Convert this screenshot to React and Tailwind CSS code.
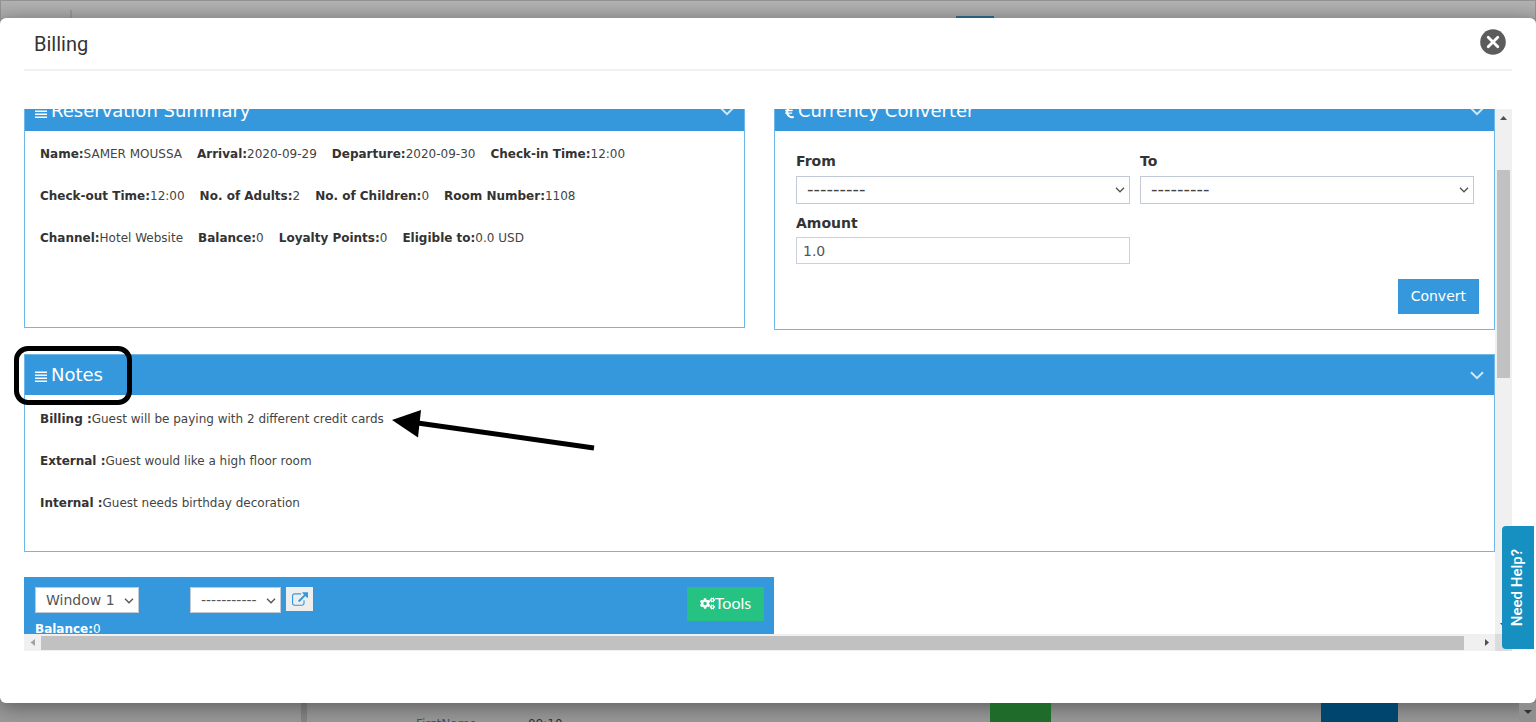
import React from "react";
import { FaCogs, FaEuroSign } from "react-icons/fa";

const Bars = () => (
  <svg viewBox="0 0 12 11" className="mt-[2px] h-[11px] w-3 shrink-0" fill="currentColor" aria-hidden="true">
    <path d="M0 0.500h12v1.500H0zM0 3.500h12v1.500H0zM0 6.500h12v1.500H0zM0 9.500h12v1.500H0z" />
  </svg>
);

const Chevron = ({ className }) => (
  <svg viewBox="0 0 14 9" className={className} fill="none" stroke="currentColor" strokeWidth="2" aria-hidden="true">
    <path d="M1 1.2l6 6 6-6" />
  </svg>
);

function PanelHead({ icon, title }) {
  return (
    <div className="flex h-10 items-center gap-1 bg-[#3598dc] px-[10px] text-white">
      {icon}
      <h2 className="flex-1 text-[18px] leading-6">{title}</h2>
      <button type="button" aria-label={`Collapse ${title}`} className="text-[#d0e8f8]">
        <Chevron className="h-[9px] w-[14px]" />
      </button>
    </div>
  );
}

function Field({ label, value }) {
  return (
    <span className="whitespace-nowrap">
      <b className="text-[#333]">{label}</b>
      {value}
    </span>
  );
}

function Select({ id, label, options, className }) {
  return (
    <div className="relative">
      <select id={id} aria-label={label} className={className}>
        {options.map((o) => (
          <option key={o}>{o}</option>
        ))}
      </select>
      <Chevron className="pointer-events-none absolute top-[11px] right-[5px] h-[6px] w-[10px] text-[#555]" />
    </div>
  );
}

const summary = [
  [["Name:", "SAMER MOUSSA"], ["Arrival:", "2020-09-29"], ["Departure:", "2020-09-30"], ["Check-in Time:", "12:00"]],
  [["Check-out Time:", "12:00"], ["No. of Adults:", "2"], ["No. of Children:", "0"], ["Room Number:", "1108"]],
  [["Channel:", "Hotel Website"], ["Balance:", "0"], ["Loyalty Points:", "0"], ["Eligible to:", "0.0 USD"]],
];

const notes = [
  ["Billing :", "Guest will be paying with 2 different credit cards"],
  ["External :", "Guest would like a high floor room"],
  ["Internal :", "Guest needs birthday decoration"],
];

const formSelect =
  "block h-7 w-full appearance-none border border-[#c2cad8] bg-white pb-[2px] pl-[10px] text-[18px] leading-6 text-[#444]";
const barSelect =
  "block h-[26px] w-full appearance-none border border-[#c2cad8] bg-white pl-[10px] text-[14px] leading-5 text-[#555]";

export default function App() {
  return (
    <div className="flex h-screen flex-col overflow-hidden bg-[#999] font-['DejaVu_Sans',sans-serif] text-[#333]">
      <div className="flex h-[18px] shrink-0 items-end border border-b-0 border-[#929292] bg-linear-to-b from-[#b1b1b1] to-[#a8a8a8]">
        <div className="w-[4.5%]" />
        <div className="h-2 w-[2px] bg-[#999]" />
        <div className="w-[57.6%]" />
        <div className="h-[2px] w-[38px] bg-[#2f6c8c]" />
      </div>

      <main className="relative z-10 flex min-h-0 flex-1 flex-col rounded-md bg-white px-6 pb-[52px] shadow-[0_4px_20px_rgba(0,0,0,0.4)]">
        <header className="flex h-[53px] shrink-0 items-start justify-between border-b-2 border-[#f1f1f1] pr-[6px] pl-[10px]">
          <h1 className="pt-3 font-['Roboto',sans-serif] text-[20px] leading-7">Billing</h1>
          <button type="button" aria-label="Close" className="mt-[11px]">
            <svg viewBox="0 0 26 26" className="size-[26px]" aria-hidden="true">
              <circle cx="13" cy="13" r="12.8" fill="#5c5c5c" />
              <path d="M8.2 8.2l9.6 9.6M17.8 8.2l-9.6 9.6" stroke="#fff" strokeWidth="2.8" strokeLinecap="round" />
            </svg>
          </button>
        </header>

        <div className="mt-[38px] flex min-h-0 flex-1">
          <div className="flex min-w-0 flex-1 flex-col">
            <div className="min-h-0 flex-1 overflow-x-visible overflow-y-clip">
              <div className="-mt-[18px] grid grid-cols-2 items-start gap-[29px]">
                <section className="h-[237px] border border-t-0 border-[#70b7e8] text-[12px] leading-[18px] text-[#444]">
                  <PanelHead icon={<Bars />} title="Reservation Summary" />
                  <div className="flex flex-col gap-6 px-[15px] pt-[14px]">
                    {summary.map((row, i) => (
                      <div key={i} className="flex gap-[15px]">
                        {row.map(([l, v]) => (
                          <Field key={l} label={l} value={v} />
                        ))}
                      </div>
                    ))}
                  </div>
                </section>

                <section className="h-[239px] border border-t-0 border-[#70b7e8] text-[14px]">
                  <PanelHead icon={<FaEuroSign className="mt-[2px] h-[14px] w-[9px]" />} title="Currency Converter" />
                  <form className="pt-5 pr-[20px] pl-[21px]">
                    <div className="grid grid-cols-2 gap-x-[10px]">
                      <div>
                        <label htmlFor="from" className="block h-[25px] font-bold leading-5">From</label>
                        <Select id="from" options={["---------"]} className={formSelect} />
                      </div>
                      <div>
                        <label htmlFor="to" className="block h-[25px] font-bold leading-5">To</label>
                        <Select id="to" options={["---------"]} className={formSelect} />
                      </div>
                      <div className="pt-[9px]">
                        <label htmlFor="amount" className="block h-6 font-bold leading-5">Amount</label>
                        <input id="amount" defaultValue="1.0" className="block h-[27px] w-full border border-[#ccd0dc] bg-white pl-[6px] text-[14px] text-[#555]" />
                      </div>
                    </div>
                    <div className="-mr-[5px] flex justify-end pt-[15px]">
                      <button type="button" className="h-[35px] bg-[#3598dc] px-[13px] text-[14px] text-white">Convert</button>
                    </div>
                  </form>
                </section>
              </div>

              <section className="relative mt-6 h-[198px] border border-[#70b7e8] text-[12px] leading-[18px] text-[#444]">
                <PanelHead icon={<Bars />} title="Notes" />
                <div className="flex flex-col gap-6 px-[15px] pt-[15px]">
                  {notes.map(([l, v]) => (
                    <Field key={l} label={l} value={v} />
                  ))}
                </div>
                <div className="pointer-events-none absolute -top-[9px] -left-[11px] h-[59px] w-[118px] rounded-[14px] border-5 border-black" />
                <svg viewBox="0 0 204 44" className="pointer-events-none absolute top-[54px] left-[367px] h-11 w-[204px]" aria-hidden="true">
                  <path d="M22 13.500l180 25.500" stroke="#000" strokeWidth="5" />
                  <path d="M0 11L29 1 26 28.500z" />
                </svg>
              </section>

              <section className="mt-[25px] w-[51%] bg-[#3598dc] pt-[10px] pr-[10px] pb-5 pl-[11px] text-white">
                <div className="flex h-[33px] items-start">
                  <div className="w-[104px]">
                    <Select label="Window" options={["Window 1"]} className={barSelect} />
                  </div>
                  <div className="ml-[51px] w-[91px]">
                    <Select label="Folio" options={["-----------"]} className={barSelect} />
                  </div>
                  <button type="button" aria-label="Open" className="ml-[5px] flex h-6 w-[27px] items-center justify-center bg-[#eee] text-[#3598dc]">
                    <svg viewBox="0 0 1792 1536" className="h-[14px] w-4" fill="currentColor" aria-hidden="true">
                      <path d="M1408 928v320q0 119-84.500 203.500T1120 1536H288q-119 0-203.500-84.500T0 1248V416q0-119 84.500-203.500T288 128h704q14 0 23 9t9 23v64q0 14-9 23t-23 9H288q-66 0-113 47t-47 113v832q0 66 47 113t113 47h832q66 0 113-47t47-113V928q0-14 9-23t23-9h64q14 0 23 9t9 23zm384-864v512q0 26-19 45t-45 19-45-19l-176-176-652 652q-10 10-23 10t-23-10L695 983q-10-10-10-23t10-23l652-652-176-176q-19-19-19-45t19-45 45-19h512q26 0 45 19t19 45z" />
                    </svg>
                  </button>
                  <button type="button" className="ml-auto flex h-[34px] items-center bg-[#26c281] px-[13px] pb-[2px] font-['Lato',sans-serif] text-[16px] leading-5">
                    <FaCogs className="size-[15px]" />
                    Tools
                  </button>
                </div>
                <p className="text-[12px] leading-[18px]">
                  <b>Balance:</b>0
                </p>
              </section>
            </div>

            <div className="z-10 flex h-[17px] shrink-0 items-center bg-[#f0f0f0]">
              <svg viewBox="0 0 17 17" className="size-[17px]" aria-hidden="true">
                <path d="M11 5v7L6.500 8.500z" fill="#a3a3a3" />
              </svg>
              <div className="h-[14px] flex-1 bg-[#c1c1c1]" />
              <div className="w-[14px]" />
              <svg viewBox="0 0 17 17" className="size-[17px]" aria-hidden="true">
                <path d="M7 5v7l4-3.500z" fill="#505050" />
              </svg>
            </div>
          </div>

          <div className="flex w-[17px] shrink-0 flex-col items-center bg-[#f0f0f0]">
            <svg viewBox="0 0 17 17" className="h-[17px] w-[17px]" aria-hidden="true">
              <path d="M5 11h7L8.500 7z" fill="#505050" />
            </svg>
            <div className="basis-[44px]" />
            <div className="h-[208px] w-[13px] bg-[#c1c1c1]" />
            <div className="flex-1" />
            <svg viewBox="0 0 17 17" className="size-[17px]" aria-hidden="true">
              <path d="M5 6h7l-3.500 4z" fill="#505050" />
            </svg>
            <div className="h-[17px] w-full bg-[#dcdcdc]" />
          </div>
        </div>

        <button
          type="button"
          className="absolute right-[2px] bottom-[54px] flex h-[123px] w-8 items-center justify-center rounded-l-[4px] bg-[#1590c1] pr-[2px] font-['Roboto',sans-serif] text-[15px] font-medium text-white"
        >
          <span className="rotate-180 [writing-mode:vertical-rl]">Need Help?</span>
        </button>
      </main>

      <footer className="flex h-[19px] shrink-0 overflow-hidden bg-[#999] text-[12px] leading-[18px]">
        <div className="ml-[19.6%] w-[6px] bg-[#858585]" />
        <div className="ml-[109px] w-[112px] pt-3 text-[#2f5a78]">FirstName</div>
        <div className="pt-3 text-[#333]">09:10</div>
        <div className="flex-1" />
        <div className="z-20 w-[61px] bg-[#1f6b2a]" />
        <div className="w-[17.6%]" />
        <div className="z-20 w-[77px] bg-[#00456e]" />
        <div className="w-[121px]" />
        <div className="z-20 flex w-[17px] items-center justify-center bg-[#8f8f8f]">
          <svg viewBox="0 0 8 5" className="h-[5px] w-2" aria-hidden="true">
            <path d="M0 0h8L4 4z" fill="#333" />
          </svg>
        </div>
      </footer>
    </div>
  );
}
